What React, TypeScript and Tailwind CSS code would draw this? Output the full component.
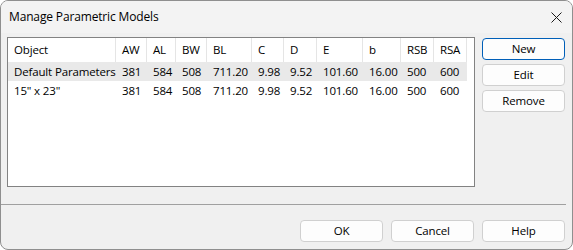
import React from "react";

const cols = [
  { label: "Object", w: "w-[108px]" },
  { label: "AW", w: "w-[31px]" },
  { label: "AL", w: "w-[29px]" },
  { label: "BW", w: "w-[31px]" },
  { label: "BL", w: "w-[45px]" },
  { label: "C", w: "w-[32px]" },
  { label: "D", w: "w-[33px]" },
  { label: "E", w: "w-[46px]" },
  { label: "b", w: "w-[38px]" },
  { label: "RSB", w: "w-[33px]" },
  { label: "RSA", w: "w-[33px]" },
];

const nums = ["381", "584", "508", "711.20", "9.98", "9.52", "101.60", "16.00", "500", "600"];
const rows = [
  { cells: ["Default Parameters", ...nums], selected: true },
  { cells: ['15" x 23"', ...nums], selected: false },
];

function Btn({ label, primary }: { label: string; primary?: boolean }) {
  return (
    <button
      className={
        "w-[83px] h-[22px] rounded-[4px] bg-[#fdfdfd] text-black flex items-center justify-center border " +
        (primary ? "border-[#005fb8]" : "border-[#d0d0d0]")
      }
    >
      {label}
    </button>
  );
}

export default function App() {
  return (
    <div
      className="w-[573px] h-[250px] bg-[#f0f0f0] border border-[#8f8f8f] rounded-[8px] overflow-hidden flex flex-col text-[11.5px] tracking-[-0.15px] text-black leading-none"
      style={{ fontFamily: '"Segoe UI", "Open Sans", sans-serif' }}
    >
      <div className="h-[32px] shrink-0 flex items-center justify-between bg-[#f3f3f3] pl-[8px] pr-[9px]">
        <span className="text-[12px]">Manage Parametric Models</span>
        <svg width="11" height="11" viewBox="0 0 11 11" className="mr-[1px]">
          <path d="M0.5 0.5 L10.5 10.5 M10.5 0.5 L0.5 10.5" stroke="#1a1a1a" strokeWidth="1" />
        </svg>
      </div>
      <div className="flex pl-[6px] pt-[4px]">
        <div className="w-[468px] h-[150px] border border-[#828282] bg-white">
          <div className="flex h-[24px]">
            {cols.map((c) => (
              <div key={c.label} className={c.w + " h-full border-r border-[#e5e5e5] pl-[6px] flex items-center"}>
                {c.label}
              </div>
            ))}
          </div>
          {rows.map((r, i) => (
            <div key={i} className={"flex h-[19px] w-[459px] " + (r.selected ? "bg-[#e9e9e9]" : "")}>
              {r.cells.map((v, j) => (
                <div key={j} className={cols[j].w + " h-full pl-[6px] flex items-center whitespace-nowrap"}>
                  {v}
                </div>
              ))}
            </div>
          ))}
        </div>
        <div className="ml-[7px] pt-[1px] flex flex-col gap-[4px]">
          <Btn label="New" primary />
          <Btn label="Edit" />
          <Btn label="Remove" />
        </div>
      </div>
      <div className="mt-[17px] h-px w-[565px] bg-[#a0a0a0] shrink-0" />
      <div className="mt-[15px] flex justify-end gap-[8px] pr-[7px]">
        <Btn label="OK" />
        <Btn label="Cancel" />
        <Btn label="Help" />
      </div>
    </div>
  );
}
